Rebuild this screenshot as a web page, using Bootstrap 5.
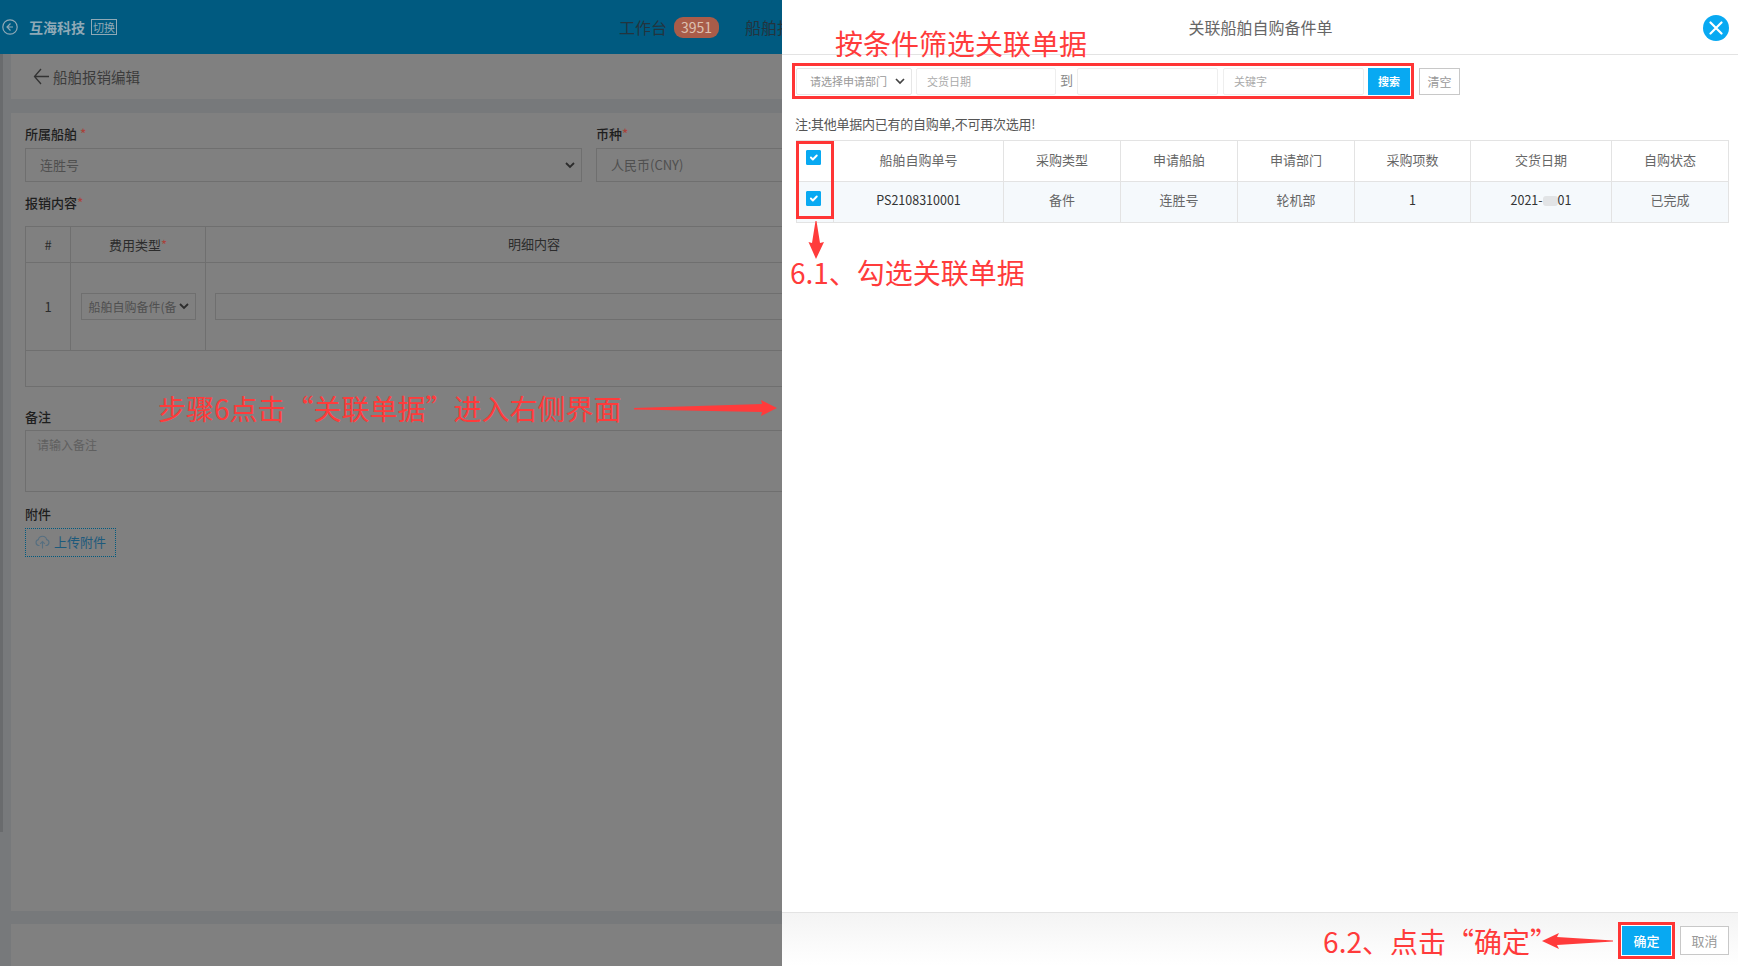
<!doctype html>
<html lang="zh-CN">
<head>
  <meta charset="UTF-8">
  <title>关联船舶自购备件单</title>
  <link href="https://cdn.jsdelivr.net/npm/bootstrap@5.3.0/dist/css/bootstrap.min.css" rel="stylesheet">
  <style>
    html, body { height:966px; overflow:hidden; }
    body { font-family:"Noto Sans CJK SC","Noto Sans",sans-serif; font-size:13px; color:#555; background:#fff; }
    .stage { position:relative; width:1738px; height:966px; overflow:hidden; }

    /* dimmed page on the left */
    .dim-page { width:782px; height:966px; flex:none; background:#77797b; overflow:hidden; color:#222; }
    .dim-top { height:54px; background:#005a80; padding-left:2px; white-space:nowrap; flex:none; }
    .dim-top > * { flex:none; }
    .dim-brand { font-size:14px; font-weight:700; color:#8fa9b6; margin-left:11px; line-height:20px; }
    .dim-switch { font-size:11px; color:#8fa9b6; border:1px solid #8fa9b6; line-height:14px; height:16px; margin-left:6px; padding:0 1px; }
    .dim-menu { font-size:16px; color:#23343e; line-height:22px; }
    .dim-count { width:45px; height:21px; border-radius:9px; background:#a95c49; color:#dcc0b0; font-size:14px; line-height:21px; text-align:center; margin:0 26px 0 7px; }
    .dim-rail { width:11px; flex:none; }
    .dim-rail-strip { width:3px; height:778px; background:#696b6d; }
    .dim-panel { background:#808080; overflow:hidden; }
    .dim-title { height:45px; padding-left:22px; font-size:14.5px; color:#3c3c3c; margin-bottom:14px; }
    .dim-form { height:798px; padding:11px 0 0 14px; margin-bottom:13px; }
    .dim-inner { width:1100px; }
    .dim-label { font-size:13px; font-weight:500; line-height:20px; color:#1e1e1e; }
    .dim-star { color:#a8443c; }
    .dim-box { border:1px solid #6f6f6f; color:#4f4f4f; background:transparent; display:flex; align-items:center; }
    .dim-chev { margin-left:auto; }
    .dim-table { width:1100px; border-collapse:collapse; table-layout:fixed; color:#2c2c2c; }
    .dim-table td, .dim-table th { border:1px solid #6f6f6f; text-align:center; font-weight:400; font-size:13px; padding:0; }
    .dim-upload { width:91px; height:29px; border:1px dotted #005a80; color:#1d5a7c; font-size:13px; padding-bottom:1px; }

    /* side panel */
    .side-panel { width:956px; height:966px; flex:none; background:#fff; }
    .side-head { height:55px; border-bottom:1px solid #e3e3e3; position:relative; padding-right:8px; }
    .side-title { font-size:16px; color:#666; padding-left:9px; }
    .side-close { position:absolute; right:9px; top:15px; width:26px; height:26px; border-radius:50%; background:#08a9f2; border:0; padding:0; display:flex; align-items:center; justify-content:center; }
    .filter-strip { padding:8px 0 0 10px; }
    .mark-box { border:3px solid #ff3535; }
    .filter-mark { padding:2px 1px 0 1px; height:36px; }
    .filter-input { height:27px; border:1px solid #eee; border-radius:2px; font-size:11px; color:#aaa; padding:0 10px; display:flex; align-items:center; }
    .filter-sel { width:116px; color:#999; border-color:#e6e6e6; padding:0 6px 0 13px; }
    .filter-date { width:140px; }
    .filter-wide { width:141px; }
    .filter-to { color:#888; font-size:13px; width:12px; line-height:24px; align-self:flex-start; }
    .btn-sky { background:#08a9f2; border:0; border-radius:0; color:#fff; font-size:11px; font-weight:700; padding:0; height:27px; width:42px; }
    .btn-plain { background:#fff; border:1px solid #c8c8c8; border-radius:0; color:#999; font-size:12px; padding:0; }
    .side-note { margin:15px 0 6px 13px; line-height:20px; font-size:13px; color:#555; letter-spacing:-.25px; }
    .pick-wrap { position:relative; width:932px; margin-left:14px; }
    .pick-table { table-layout:fixed; width:932px; margin:0; border-color:#e3e3e3; color:#666; }
    .pick-table th, .pick-table td { height:41px; padding:0 0 3px; text-align:center; vertical-align:middle; font-weight:400; font-size:13px; }
    .pick-table td { padding-bottom:5px; }
    .pick-table tbody tr > * { background:#f5f9fc; --bs-table-bg-type:#f5f9fc; }
    .pick-table .pick-num { color:#333; font-size:12.5px; padding-bottom:3px; }
    .pick-table .pick-chk { vertical-align:top; padding:9px 3px 0 0; line-height:0; }
    .pick-chk .form-check-input { width:15px; height:15px; margin:0; border-radius:1px; background-color:#08a9f2; border-color:#08a9f2; }
    .date-blur { display:inline-block; width:15px; height:10px; background:#e2e4e6; border-radius:3px; vertical-align:-1px; }
    .chk-mark { position:absolute; left:0; top:1px; width:38px; height:78px; }
    .side-foot { height:54px; border-top:1px solid #e3e3e3; background:linear-gradient(#f4f4f4,#fff); padding:2px 9px 0 0; }
    .foot-note { font-size:28px; line-height:36px; color:#ff3b3b; white-space:nowrap; }
    .foot-quote { margin-right:-16px; }
    .btn-ok { width:51px; height:31px; font-size:13px; display:block; font-weight:500; border:1px solid #fff; }
    .btn-no { width:49px; height:29px; margin-left:5px; font-size:13px; }

    /* red notes lying over the screenshot */
    .over-note { position:absolute; font-size:28px; line-height:36px; color:#ff3b3b; white-space:nowrap; }
    .note-step { left:158px; top:390px; }
    .note-filter { left:835px; top:25px; }
    .note-tick { left:790px; top:254px; }
    .over-arrow { position:absolute; left:0; top:0; pointer-events:none; }
  </style>
</head>
<body>
<div class="stage d-flex">

  <!-- Dimmed edit page -->
  <div class="dim-page d-flex flex-column">
    <div class="dim-top d-flex align-items-center">
      <svg width="16" height="16" viewBox="0 0 16 16" fill="none" stroke="#8fa9b6" stroke-width="1.2"><circle cx="8" cy="8" r="7.2"/><path d="M8.5 4.5 5 8l3.5 3.5M5 8h6"/></svg>
      <span class="dim-brand">互海科技</span>
      <span class="dim-switch">切换</span>
      <div class="d-flex align-items-center" style="margin-left:502px">
        <span class="dim-menu">工作台</span>
        <span class="dim-count">3951</span>
        <span class="dim-menu">船舶报销</span>
      </div>
    </div>
    <div class="d-flex flex-grow-1">
      <div class="dim-rail"><div class="dim-rail-strip"></div></div>
      <div class="flex-grow-1 overflow-hidden">
        <div class="dim-panel dim-title d-flex align-items-center">
          <svg width="16" height="17" viewBox="0 0 16 17" fill="none" stroke="#333" stroke-width="1.3" class="me-1"><path d="M8 1 1.5 8.5 8 16M1.5 8.5H16"/></svg>
          <span>船舶报销编辑</span>
        </div>
        <div class="dim-panel dim-form">
          <div class="dim-inner">
            <div class="d-flex" style="gap:14px">
              <div style="width:557px">
                <div class="dim-label mb-1">所属船舶 <span class="dim-star">*</span></div>
                <div class="dim-box" style="height:34px;padding:0 6px 0 14px">连胜号
                  <svg class="dim-chev" width="10" height="7" viewBox="0 0 10 7" fill="none" stroke="#2c2c2c" stroke-width="1.8"><path d="m1 1 4 4 4-4"/></svg>
                </div>
              </div>
              <div style="width:400px">
                <div class="dim-label mb-1">币种<span class="dim-star">*</span></div>
                <div class="dim-box" style="height:34px;padding:0 14px">人民币(CNY)</div>
              </div>
            </div>
            <div class="dim-label" style="margin:11px 0 13px">报销内容<span class="dim-star">*</span></div>
            <table class="dim-table">
              <colgroup><col style="width:45px"><col style="width:135px"><col></colgroup>
              <tr style="height:36px"><th>#</th><th>费用类型<span class="dim-star">*</span></th><th style="text-align:left;padding:0 0 2px 302px">明细内容</th></tr>
              <tr style="height:88px">
                <td>1</td>
                <td>
                  <div class="dim-box mx-auto" style="width:115px;height:27px;padding:0 6px 0 7px;font-size:12px;white-space:nowrap;overflow:hidden">船舶自购备件(备
                    <svg class="dim-chev" width="10" height="7" viewBox="0 0 10 7" fill="none" stroke="#2c2c2c" stroke-width="1.8"><path d="m1 1 4 4 4-4"/></svg>
                  </div>
                </td>
                <td style="padding:0 0 0 9px"><div class="dim-box" style="height:27px"></div></td>
              </tr>
              <tr style="height:36px"><td colspan="3"></td></tr>
            </table>
            <div class="dim-label" style="margin-top:20px">备注</div>
            <div class="dim-box align-items-start" style="height:62px;margin-top:3px;padding:5px 11px;font-size:12px;color:#5f5f5f">请输入备注</div>
            <div class="dim-label" style="margin-top:12px">附件</div>
            <div class="dim-upload d-flex align-items-center justify-content-center gap-1" style="margin-top:4px">
              <svg width="15" height="14" viewBox="0 0 15 14" fill="none" stroke="#566f80" stroke-width="1.1"><path d="M4.5 10.5H3.6a3 3 0 0 1-.2-5.9 4.2 4.2 0 0 1 8.2 0 3 3 0 0 1-.2 5.9h-.9M7.5 13.5V6.8M5.2 8.8l2.3-2.3 2.3 2.3"/></svg>
              <span>上传附件</span>
            </div>
          </div>
        </div>
        <div class="dim-panel" style="height:42px"></div>
      </div>
    </div>
  </div>

  <!-- Side panel -->
  <div class="side-panel d-flex flex-column">
    <div class="side-head d-flex align-items-center justify-content-center">
      <span class="side-title">关联船舶自购备件单</span>
      <button type="button" class="side-close" aria-label="关闭">
        <svg width="14" height="14" viewBox="0 0 14 14" fill="none" stroke="#fff" stroke-width="2.2" stroke-linecap="round"><path d="m1.5 1.5 11 11M12.5 1.5l-11 11"/></svg>
      </button>
    </div>

    <div class="filter-strip d-flex align-items-start">
      <div class="mark-box filter-mark d-flex align-items-start" style="gap:4px">
        <div class="filter-input filter-sel">
          <span>请选择申请部门</span>
          <svg class="ms-auto" width="10" height="7" viewBox="0 0 10 7" fill="none" stroke="#444" stroke-width="1.7"><path d="m1 1 4 4 4-4"/></svg>
        </div>
        <div class="filter-input filter-date">交货日期</div>
        <span class="filter-to">到</span>
        <div class="filter-input filter-wide" style="margin-left:1px"></div>
        <div class="filter-input filter-wide" style="margin-left:1px">关键字</div>
        <button type="button" class="btn btn-sky">搜索</button>
      </div>
      <button type="button" class="btn btn-plain" style="width:41px;height:27px;margin:5px 0 0 5px">清空</button>
    </div>

    <div class="side-note">注:其他单据内已有的自购单,不可再次选用!</div>

    <div class="pick-wrap">
      <table class="table table-bordered pick-table">
        <colgroup>
          <col style="width:37px"><col style="width:170px"><col style="width:117px"><col style="width:117px"><col style="width:117px"><col style="width:116px"><col style="width:141px"><col style="width:117px">
        </colgroup>
        <thead>
          <tr>
            <th class="pick-chk"><input class="form-check-input" type="checkbox" checked></th>
            <th>船舶自购单号</th><th>采购类型</th><th>申请船舶</th><th>申请部门</th><th>采购项数</th><th>交货日期</th><th>自购状态</th>
          </tr>
        </thead>
        <tbody>
          <tr>
            <td class="pick-chk"><input class="form-check-input" type="checkbox" checked></td>
            <td class="pick-num">PS2108310001</td><td>备件</td><td>连胜号</td><td>轮机部</td><td class="pick-num">1</td>
            <td class="pick-num">2021-<span class="date-blur"></span>01</td><td>已完成</td>
          </tr>
        </tbody>
      </table>
      <div class="mark-box chk-mark"></div>
    </div>

    <div class="side-foot mt-auto d-flex align-items-center justify-content-end">
      <span class="foot-note">6.2、点击“确定<span class="foot-quote">”</span></span>
      <svg width="71" height="16" viewBox="0 0 71 16"><polygon points="0,8 17,0 15,4 71,7.5 71,8.5 15,12 17,16" fill="#ff3b3b"/></svg>
      <div class="mark-box" style="margin-left:5px"><button type="button" class="btn btn-sky btn-ok">确定</button></div>
      <button type="button" class="btn btn-plain btn-no">取消</button>
    </div>
  </div>

  <!-- Annotations over the screenshot -->
  <div class="over-note note-step">步骤6点击“关联单据”进入右侧界面</div>
  <div class="over-note note-filter">按条件筛选关联单据</div>
  <div class="over-note note-tick">6.1、勾选关联单据</div>
  <svg class="over-arrow" width="1738" height="966" viewBox="0 0 1738 966">
    <polygon points="634,408 762,404 761,400 777,408 761,416 762,412 634,409.5" fill="#ff3b3b"/>
    <polygon points="815.5,221 816.5,221 820,243 824,242 816,259 808.5,242 812,243" fill="#ff3b3b"/>
  </svg>
</div>
</body>
</html>
